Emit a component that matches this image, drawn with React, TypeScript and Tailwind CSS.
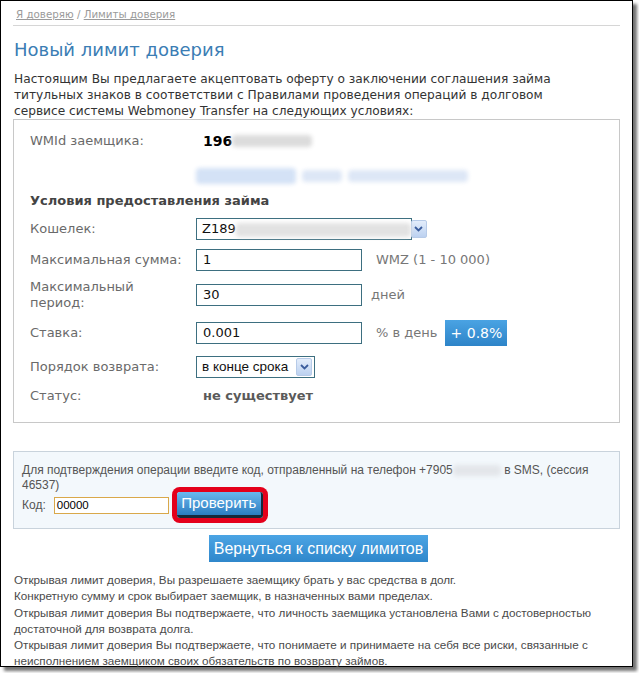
import React from "react";

const dv = "font-['DejaVu_Sans',_Verdana,_sans-serif]";
const lib = "font-['Liberation_Sans',_Arial,_sans-serif]";

const Blur = ({ w, h = 10, color = "bg-[#d8d8d8]" }: { w: number; h?: number; color?: string }) => (
  <span
    className={`inline-block align-middle rounded-sm blur-[2px] ${color}`}
    style={{ width: w, height: h }}
  />
);

const SelectArrow = () => (
  <span className="flex h-[18px] w-[16px] shrink-0 items-center justify-center rounded-[2px] border border-[#b7cbe8] bg-gradient-to-b from-[#e3edfb] to-[#bcd1f0]">
    <svg width="9" height="6" viewBox="0 0 9 6">
      <path d="M1 1l3.5 3.5L8 1" fill="none" stroke="#3a5c9c" strokeWidth="1.8" />
    </svg>
  </span>
);

const Row = ({
  label,
  className = "h-[22px]",
  children,
}: {
  label: React.ReactNode;
  className?: string;
  children: React.ReactNode;
}) => (
  <div className={`grid grid-cols-[166px_1fr] items-center ${className}`}>
    <div className="text-[13px] leading-[16px] text-[#6a6a6a]">{label}</div>
    <div className="flex items-center">{children}</div>
  </div>
);

const inputCls =
  "h-[22px] w-[166px] border border-[#3d6f80] bg-white px-[6px] text-[13px] leading-[20px] text-[#111]";

export default function App() {
  return (
    <div className={`h-[673px] w-[639px] bg-white ${dv}`}>
      <div className="h-[667px] w-[633px] border border-black bg-white px-[12px] shadow-[4px_4px_3px_rgba(0,0,0,0.55)]">
        <div className="border-b border-[#d6d6d6] pb-[4px] pl-[3px] pt-[6px] text-[10.3px] leading-[14px] text-[#9a9a9a]">
          <span className="underline">Я доверяю</span> / <span className="underline">Лимиты доверия</span>
        </div>

        <h1 className="mt-[12px] pl-[1px] text-[18px] leading-[24px] text-[#3b7db4]">Новый лимит доверия</h1>

        <p className="mt-[9px] whitespace-nowrap pl-[1px] text-[12.2px] leading-[16px] text-[#333]">
          Настоящим Вы предлагаете акцептовать оферту о заключении соглашения займа
          <br />
          титульных знаков в соответствии с Правилами проведения операций в долговом
          <br />
          сервисе системы Webmoney Transfer на следующих условиях:
        </p>

        <div className="border border-[#c8c8c8] px-[16px] pb-[18px] pt-[10px]">
          <Row label="WMId заемщика:">
            <span className="pl-[7px] text-[14px] font-bold text-black">196</span>
            <Blur w={80} h={12} color="bg-[#dcdcdc]" />
          </Row>
          <div className="mt-[14px] grid h-[20px] grid-cols-[166px_1fr] items-center">
            <span />
            <span className="flex items-center gap-[6px]">
              <Blur w={100} h={16} color="bg-[#d4e2f6]" />
              <Blur w={40} h={12} color="bg-[#dde7f6]" />
              <Blur w={120} h={12} color="bg-[#dde7f6]" />
            </span>
          </div>
          <div className="mt-[6px] flex h-[18px] items-center text-[13px] font-bold text-[#444]">
            Условия предоставления займа
          </div>

          <Row label="Кошелек:" className="mt-[8px] h-[22px]">
            <div className="flex h-[22px] w-[216px] items-center border border-[#3d6f80] bg-white pl-[5px] pr-[2px] text-[13px] text-[#111]">
              <span>Z189</span>
              <span className="flex-1">
                <Blur w={175} h={14} color="bg-[#e2e2e2]" />
              </span>
              <SelectArrow />
            </div>
          </Row>

          <Row label="Максимальная сумма:" className="mt-[9px] h-[22px]">
            <div className={inputCls}>1</div>
            <span className="ml-[14px] text-[13px] text-[#777]">WMZ (1 - 10 000)</span>
          </Row>

          <Row
            label={
              <>
                Максимальный
                <br />
                период:
              </>
            }
            className="mt-[8px] h-[32px]"
          >
            <div className={inputCls}>30</div>
            <span className="ml-[9px] text-[13px] text-[#777]">дней</span>
          </Row>

          <Row label="Ставка:" className="mt-[9px] h-[26px]">
            <div className={inputCls}>0.001</div>
            <span className="ml-[14px] text-[13px] text-[#777]">% в день</span>
            <button className="ml-[8px] h-[26px] w-[62px] bg-gradient-to-b from-[#4aa3e3] to-[#2d84c8] text-[14px] text-white">
              + 0.8%
            </button>
          </Row>

          <Row label="Порядок возврата:" className="mt-[10px] h-[22px]">
            <div className="flex h-[22px] w-[119px] items-center justify-between whitespace-nowrap border border-[#3d6f80] bg-white pl-[5px] pr-[2px] text-[#111]">
              <span className={`${lib} text-[13.5px]`}>в конце срока</span>
              <SelectArrow />
            </div>
          </Row>

          <Row label="Статус:" className="mt-[8px] h-[18px]">
            <span className="pl-[7px] text-[13px] font-bold text-[#5a5a5a]">не существует</span>
          </Row>
        </div>

        <div className={`mt-[28px] border border-[#c9d3dc] bg-[#f3f8fc] pb-[10px] pl-[8px] pr-[6px] pt-[11px] text-[12px] text-[#555] ${lib}`}>
          <p className="whitespace-nowrap leading-[15px]">
            Для подтверждения операции введите код, отправленный на телефон +7905
            <Blur w={48} h={11} color="bg-[#e3e6ea]" /> в SMS, (сессия
            <br />
            46537)
          </p>
          <div className="mt-[-1px] flex h-[26px] items-center">
            <span>Код:</span>
            <div className="ml-[8px] h-[17px] w-[115px] border border-[#d9a84a] bg-white px-[2px] text-[11.5px] leading-[15px] text-black">
              00000
            </div>
            <button className="ml-[8px] h-[26px] w-[86px] rounded-[3px] border-b-[3px] border-r-[2px] border-[#17283a] bg-gradient-to-b from-[#6ab8ee] to-[#2b7dc1] text-[15px] text-white ring-[5px] ring-[#e4001b]">
              Проверить
            </button>
          </div>
        </div>

        <div className="mt-[6px] flex justify-center pl-[4px]">
          <button className={`h-[27px] w-[219px] bg-gradient-to-b from-[#4ba4e4] to-[#2f87cb] text-[16px] text-white ${lib}`}>
            Вернуться к списку лимитов
          </button>
        </div>

        <div className={`mt-[10px] whitespace-nowrap pl-[1px] text-[11.7px] leading-[16.3px] text-[#4a4a4a] ${lib}`}>
          <p>Открывая лимит доверия, Вы разрешаете заемщику брать у вас средства в долг.</p>
          <p>Конкретную сумму и срок выбирает заемщик, в назначенных вами пределах.</p>
          <p>
            Открывая лимит доверия Вы подтвержаете, что личность заемщика установлена Вами с достоверностью
            <br />
            достаточной для возврата долга.
          </p>
          <p>
            Открывая лимит доверия Вы подтвержаете, что понимаете и принимаете на себя все риски, связанные с
            <br />
            неисполнением заемщиком своих обязательств по возврату займов.
          </p>
        </div>
      </div>
    </div>
  );
}
